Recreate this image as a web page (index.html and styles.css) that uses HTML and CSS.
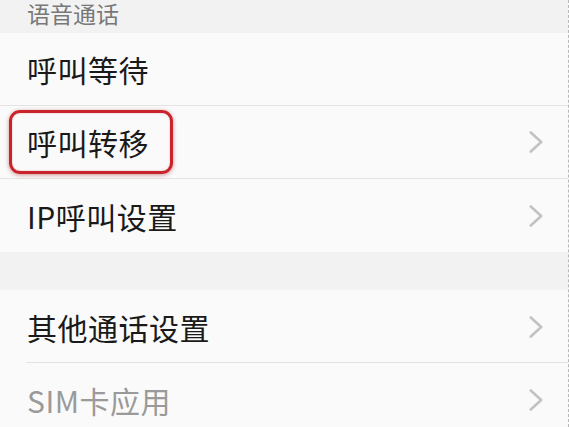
FILE: index.html
```html
<!DOCTYPE html>
<html lang="zh-CN">
<head>
<meta charset="utf-8">
<link rel="stylesheet" href="styles.css">
</head>
<body>
<div class="page">
  <div class="section-title">语音通话</div>
  <div class="group">
    <div class="row row-full">
      <span class="label">呼叫等待</span>
    </div>
    <div class="row row-full">
      <span class="label label-marked">呼叫转移</span>
      <svg class="chev" width="14" height="22" viewBox="0 0 14 22"><polyline points="1.8,1.5 12.2,11 1.8,20.5" fill="none" stroke="#c2c2c2" stroke-width="2.6" stroke-linecap="round" stroke-linejoin="round"/></svg>
    </div>
    <div class="row">
      <span class="label">IP呼叫设置</span>
      <svg class="chev" width="14" height="22" viewBox="0 0 14 22"><polyline points="1.8,1.5 12.2,11 1.8,20.5" fill="none" stroke="#c2c2c2" stroke-width="2.6" stroke-linecap="round" stroke-linejoin="round"/></svg>
    </div>
  </div>
  <div class="spacer"></div>
  <div class="group">
    <div class="row row-inset">
      <span class="label">其他通话设置</span>
      <svg class="chev" width="14" height="22" viewBox="0 0 14 22"><polyline points="1.8,1.5 12.2,11 1.8,20.5" fill="none" stroke="#c2c2c2" stroke-width="2.6" stroke-linecap="round" stroke-linejoin="round"/></svg>
    </div>
    <div class="row">
      <span class="label label-dim">SIM卡应用</span>
      <svg class="chev" width="14" height="22" viewBox="0 0 14 22"><polyline points="1.8,1.5 12.2,11 1.8,20.5" fill="none" stroke="#c2c2c2" stroke-width="2.6" stroke-linecap="round" stroke-linejoin="round"/></svg>
    </div>
  </div>
</div>
</body>
</html>
```
FILE: styles.css
```css
html, body {
  margin: 0;
  padding: 0;
  background: #fafafa;
}
body {
  font-family: "Noto Sans CJK SC", "Noto Sans", sans-serif;
  overflow: hidden;
}
.page {
  width: 568px;
  height: 427px;
  border-right: 1px dashed #b8b8b8;
  background: #fafafa;
  overflow: hidden;
}
.section-title {
  height: 33px;
  box-sizing: border-box;
  padding: 1px 0 0 27px;
  line-height: 25px;
  font-size: 23px;
  color: #787878;
  background: #f2f2f2;
}
.group {
  background: #fafafa;
}
.row {
  position: relative;
  height: 73px;
  display: flex;
  align-items: center;
  justify-content: space-between;
  padding: 0 25px 0 27px;
  box-sizing: border-box;
}
.row-full {
  border-bottom: 1px solid #e4e4e4;
}
.row-inset::after {
  content: "";
  position: absolute;
  left: 26px;
  right: 0;
  bottom: 0;
  height: 1px;
  background: #e2e2e2;
}
.label {
  font-size: 30px;
  line-height: 40px;
  color: #1a1a1a;
  letter-spacing: 0.5px;
}
.label-dim {
  color: #9a9a9a;
}
.label-marked {
  margin-left: -18px;
  padding: 9px 21px 9px 15px;
  border: 3px solid #c9242b;
  border-radius: 11px;
  box-shadow: 0 1px 4px rgba(150, 20, 20, 0.45), inset 0 0 2px rgba(150, 20, 20, 0.3);
}
.chev {
  display: block;
  flex: none;
}
.spacer {
  height: 38px;
  background: #f2f2f2;
}
```
